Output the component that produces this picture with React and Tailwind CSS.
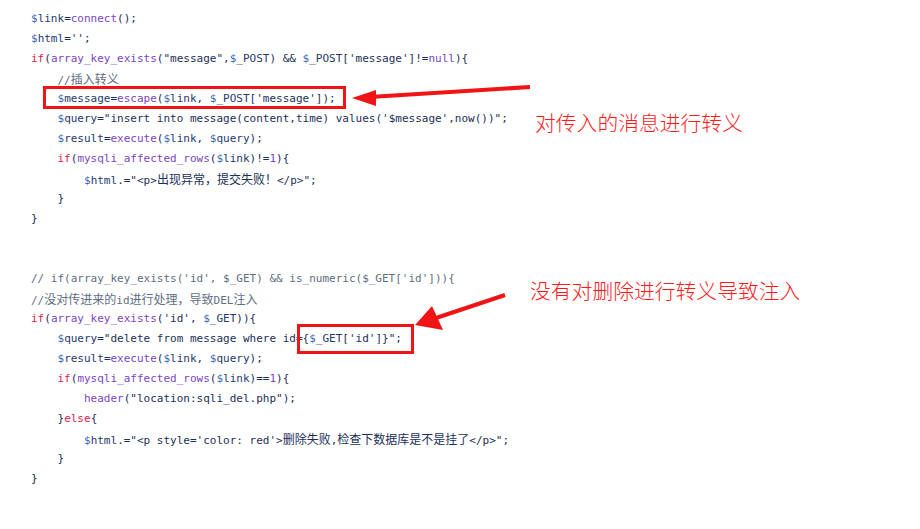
import React from "react";

const C = {
  v: "text-[#1f3a6b]",
  d: "text-[#3a6cb5]",
  f: "text-[#7a45c4]",
  k: "text-[#d8244c]",
  c: "text-[#5f6e82]",
  t: "text-[#1b2f57]",
};

function withCJK(text, key) {
  const parts = text.split(/([\u3000-\u9fff\uff00-\uffef]+)/);
  return parts.map((p, i) =>
    /[\u3000-\u9fff\uff00-\uffef]/.test(p) ? (
      <span
        key={key + "-" + i}
        className="text-[12px] [font-family:'Noto_Sans_CJK_SC',sans-serif]"
      >
        {p}
      </span>
    ) : (
      <React.Fragment key={key + "-" + i}>{p}</React.Fragment>
    )
  );
}

function Tok({ t, s }) {
  if (t === "v") {
    return (
      <span className={C.v}>
        <span className={C.d}>$</span>
        {s.slice(1)}
      </span>
    );
  }
  return <span className={C[t] || C.t}>{withCJK(s, s)}</span>;
}

const lines = [
  [0, [["v", "$link"], ["t", "="], ["f", "connect"], ["t", "();"]]],
  [0, [["v", "$html"], ["t", "='';"]]],
  [0, [["k", "if"], ["t", "("], ["f", "array_key_exists"], ["t", "(\"message\","], ["v", "$_POST"], ["t", ") && "], ["v", "$_POST"], ["t", "['message']!="], ["f", "null"], ["t", "){"]]],
  [1, [["c", "//插入转义"]]],
  [1, [["v", "$message"], ["t", "="], ["f", "escape"], ["t", "("], ["v", "$link"], ["t", ", "], ["v", "$_POST"], ["t", "['message']);"]]],
  [1, [["v", "$query"], ["t", "=\"insert into message(content,time) values('$message',now())\";"]]],
  [1, [["v", "$result"], ["t", "="], ["f", "execute"], ["t", "("], ["v", "$link"], ["t", ", "], ["v", "$query"], ["t", ");"]]],
  [1, [["k", "if"], ["t", "("], ["f", "mysqli_affected_rows"], ["t", "("], ["v", "$link"], ["t", ")!="], ["f", "1"], ["t", "){"]]],
  [2, [["v", "$html"], ["t", ".=\"<p>出现异常，提交失败！</p>\";"]]],
  [1, [["t", "}"]]],
  [0, [["t", "}"]]],
  [0, []],
  [0, []],
  [0, [["c", "// if(array_key_exists('id', $_GET) && is_numeric($_GET['id'])){"]]],
  [0, [["c", "//没对传进来的id进行处理，导致DEL注入"]]],
  [0, [["k", "if"], ["t", "("], ["f", "array_key_exists"], ["t", "('id', "], ["v", "$_GET"], ["t", ")){"]]],
  [1, [["v", "$query"], ["t", "=\"delete from message where id={"], ["v", "$_GET"], ["t", "['id']}\";"]]],
  [1, [["v", "$result"], ["t", "="], ["f", "execute"], ["t", "("], ["v", "$link"], ["t", ", "], ["v", "$query"], ["t", ");"]]],
  [1, [["k", "if"], ["t", "("], ["f", "mysqli_affected_rows"], ["t", "("], ["v", "$link"], ["t", ")=="], ["f", "1"], ["t", "){"]]],
  [2, [["f", "header"], ["t", "(\"location:sqli_del.php\");"]]],
  [1, [["t", "}"], ["k", "else"], ["t", "{"]]],
  [2, [["v", "$html"], ["t", ".=\"<p style='color: red'>删除失败,检查下数据库是不是挂了</p>\";"]]],
  [1, [["t", "}"]]],
  [0, [["t", "}"]]],
];

const indentCls = ["pl-0", "pl-[26.5px]", "pl-[53px]"];

export default function App() {
  return (
    <div className="relative w-[920px] h-[529px] overflow-hidden bg-white">
      <div className="flex flex-col pt-[9px] pl-[31px] text-[11px] leading-[20px] whitespace-pre [font-family:'DejaVu_Sans_Mono','Noto_Sans_CJK_SC',monospace]">
        {lines.map(([ind, toks], i) => (
          <div key={i} className={"h-[20px] " + indentCls[ind]}>
            {toks.map(([t, s], j) => (
              <Tok key={j} t={t} s={s} />
            ))}
          </div>
        ))}
      </div>

      <svg
        className="absolute inset-0 pointer-events-none"
        width="920"
        height="529"
        viewBox="0 0 920 529"
      >
        <rect x="44.5" y="87.5" width="300" height="20" fill="none" stroke="#f01414" strokeWidth="3" />
        <rect x="298.5" y="325.5" width="114" height="27" fill="none" stroke="#f01414" strokeWidth="3" />
        <line x1="530" y1="87" x2="370" y2="97" stroke="#f01414" strokeWidth="4" />
        <polygon points="352,98 376,90 376,106" fill="#f01414" />
        <line x1="505" y1="295" x2="436" y2="318" stroke="#f01414" strokeWidth="4" />
        <polygon points="415,325 432,306 443,330" fill="#f01414" />
      </svg>

      <div className="absolute left-[535px] top-[108px] text-[20.8px] leading-[28px] text-[#ff1a1a] [font-family:'Noto_Sans_CJK_SC',sans-serif] font-light">
        对传入的消息进行转义
      </div>
      <div className="absolute left-[530px] top-[276px] text-[20.8px] leading-[28px] text-[#ff1a1a] [font-family:'Noto_Sans_CJK_SC',sans-serif] font-light">
        没有对删除进行转义导致注入
      </div>
    </div>
  );
}
